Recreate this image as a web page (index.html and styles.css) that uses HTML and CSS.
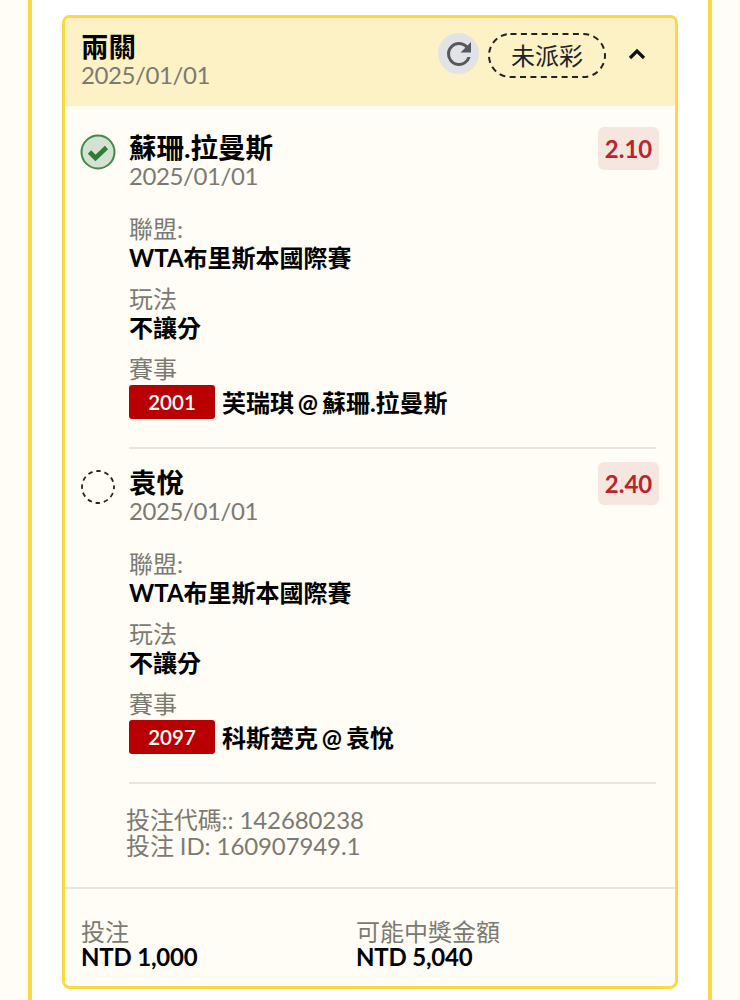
FILE: index.html
```html
<!DOCTYPE html>
<html lang="zh-Hant">
<head>
  <meta charset="UTF-8">
  <meta name="viewport" content="width=device-width, initial-scale=1.0">
  <title>兩關</title>
  <link rel="stylesheet" href="styles.css">
</head>
<body>
  <div class="panel">
    <div class="card">
      <div class="card-head">
        <div class="head-title">
          <h2>兩關</h2>
          <div class="date">2025/01/01</div>
        </div>
        <div class="head-actions">
          <span class="refresh">
            <svg width="36" height="36" viewBox="0 0 24 24"><path fill="#55585c" d="M17.65 6.35A7.96 7.96 0 0 0 12 4a8 8 0 1 0 7.73 10h-2.08A6 6 0 1 1 12 6c1.66 0 3.14.69 4.22 1.78L13 11h7V4l-2.35 2.35z"/></svg>
          </span>
          <span class="status">
            <svg class="status-line" width="118" height="45" viewBox="0 0 118 45"><rect x="1" y="1" width="116" height="43" rx="21.5" fill="none" stroke="#222" stroke-width="2" stroke-dasharray="6 4.4"/></svg>
            未派彩
          </span>
          <svg class="chevron" width="18" height="12" viewBox="0 0 18 12"><path fill="none" stroke="#111" stroke-width="3.2" d="M2 10 9 3l7 7"/></svg>
        </div>
      </div>

      <div class="card-body">
        <div class="leg">
          <div class="leg-top">
            <svg class="mark" width="36" height="36" viewBox="0 0 36 36"><circle cx="18" cy="18" r="16.5" fill="#d5e2d3" stroke="#3f8a44" stroke-width="2"/><path fill="none" stroke="#2e7d32" stroke-width="4.6" d="m9.5 18 6 6 11-10.5"/></svg>
            <div class="leg-name">
              <h3>蘇珊.拉曼斯</h3>
              <div class="date">2025/01/01</div>
            </div>
            <span class="odds">2.10</span>
          </div>
          <div class="field"><div class="label">聯盟:</div><div class="value">WTA布里斯本國際賽</div></div>
          <div class="field"><div class="label">玩法</div><div class="value">不讓分</div></div>
          <div class="field">
            <div class="label">賽事</div>
            <div class="match"><span class="match-no">2001</span><span class="value">芙瑞琪 @ 蘇珊.拉曼斯</span></div>
          </div>
        </div>

        <div class="leg">
          <div class="leg-top">
            <svg class="mark" width="36" height="36" viewBox="0 0 36 36"><circle cx="18" cy="18" r="16" fill="none" stroke="#222" stroke-width="1.8" stroke-dasharray="4.6 3.78" stroke-dashoffset="2.3"/></svg>
            <div class="leg-name">
              <h3>袁悅</h3>
              <div class="date">2025/01/01</div>
            </div>
            <span class="odds">2.40</span>
          </div>
          <div class="field"><div class="label">聯盟:</div><div class="value">WTA布里斯本國際賽</div></div>
          <div class="field"><div class="label">玩法</div><div class="value">不讓分</div></div>
          <div class="field">
            <div class="label">賽事</div>
            <div class="match"><span class="match-no">2097</span><span class="value">科斯楚克 @ 袁悅</span></div>
          </div>
        </div>

        <div class="codes">
          <div>投注代碼:: 142680238</div>
          <div>投注 ID: 160907949.1</div>
        </div>
      </div>

      <div class="card-foot">
        <div class="total">
          <div class="label">投注</div>
          <div class="amount">NTD 1,000</div>
        </div>
        <div class="total">
          <div class="label">可能中獎金額</div>
          <div class="amount">NTD 5,040</div>
        </div>
      </div>
    </div>
  </div>
</body>
</html>
```

FILE: styles.css
```css
html, body {
  height: 100%;
}

body {
  margin: 0;
  background: #fffdf5;
  color: #000;
  font-family: Lato, "Noto Sans CJK TC", sans-serif;
  overflow: hidden;
}

.panel {
  margin: 0 28px;
  padding: 15px 30px;
  height: 1000px;
  box-sizing: border-box;
  background: #fff;
  border-left: 4px solid #fbd940;
  border-right: 4px solid #fbd940;
}

.card {
  height: 974px;
  box-sizing: border-box;
  border: 3px solid #fbd940;
  border-radius: 8px;
  background: #fffdf5;
  display: flex;
  flex-direction: column;
}

.card-head {
  height: 88px;
  box-sizing: border-box;
  padding: 15px 29px 0 16px;
  background: #fdf1c6;
  border-radius: 5px 5px 0 0;
  display: flex;
  justify-content: space-between;
  align-items: flex-start;
}

h2, h3 {
  margin: 0;
  font-size: 27.5px;
  line-height: 28px;
  font-weight: 700;
}

.date {
  font-size: 24px;
  line-height: 28px;
  letter-spacing: -0.4px;
  color: #7b7a72;
}

.head-actions {
  display: flex;
  align-items: flex-start;
}

.refresh {
  width: 41px;
  height: 41px;
  border-radius: 50%;
  background: #e1e3e6;
  display: flex;
  align-items: center;
  justify-content: center;
}

.status {
  position: relative;
  margin-left: 9px;
  width: 118px;
  height: 45px;
  font-size: 24px;
  line-height: 45px;
  text-align: center;
  color: #222;
}

.status-line {
  position: absolute;
  left: 0;
  top: 0;
}

.chevron {
  margin: 15px 0 0 22px;
}

.card-body {
  flex: 1;
  padding: 0 19px 0 0;
}

.leg {
  margin-left: 64px;
  padding-top: 21px;
  height: 343px;
  box-sizing: border-box;
  border-bottom: 2px solid #e8e6de;
}

.leg + .leg {
  height: 335px;
  padding-top: 13px;
}

.leg-top {
  position: relative;
  display: flex;
  justify-content: space-between;
  margin-bottom: 24px;
}

.leg-name {
  padding-top: 7px;
}

.mark {
  position: absolute;
  left: -49px;
  top: 7px;
}

.odds {
  width: 61px;
  height: 43px;
  margin-right: -3px;
  border-radius: 6px;
  background: #f5e6e0;
  color: #b8262b;
  font-size: 24px;
  font-weight: 700;
  line-height: 43px;
  text-align: center;
}

.field {
  margin-bottom: 12px;
}

.label {
  font-size: 24px;
  line-height: 29px;
  color: #7b7a72;
}

.value {
  font-size: 24px;
  line-height: 29px;
  font-weight: 700;
  color: #000;
}

.match {
  display: flex;
  align-items: center;
  gap: 7px;
  margin-top: 2px;
  word-spacing: -2px;
}

.match-no {
  width: 86px;
  height: 34px;
  border-radius: 3px;
  background: #b80000;
  color: #fff;
  font-size: 20.5px;
  line-height: 34px;
  font-weight: 600;
  text-align: center;
}

.codes {
  margin: 23px 0 0 61px;
  font-size: 24px;
  line-height: 26px;
  letter-spacing: -0.1px;
  color: #7b7a72;
}

.card-foot {
  height: 99px;
  box-sizing: border-box;
  padding: 30px 16px 0;
  border-top: 2px solid #e8e6de;
  display: flex;
}

.total {
  width: 275px;
}

.total .label {
  line-height: 26px;
}

.amount {
  font-size: 24px;
  line-height: 24px;
  letter-spacing: -0.2px;
  font-weight: 700;
}
```
